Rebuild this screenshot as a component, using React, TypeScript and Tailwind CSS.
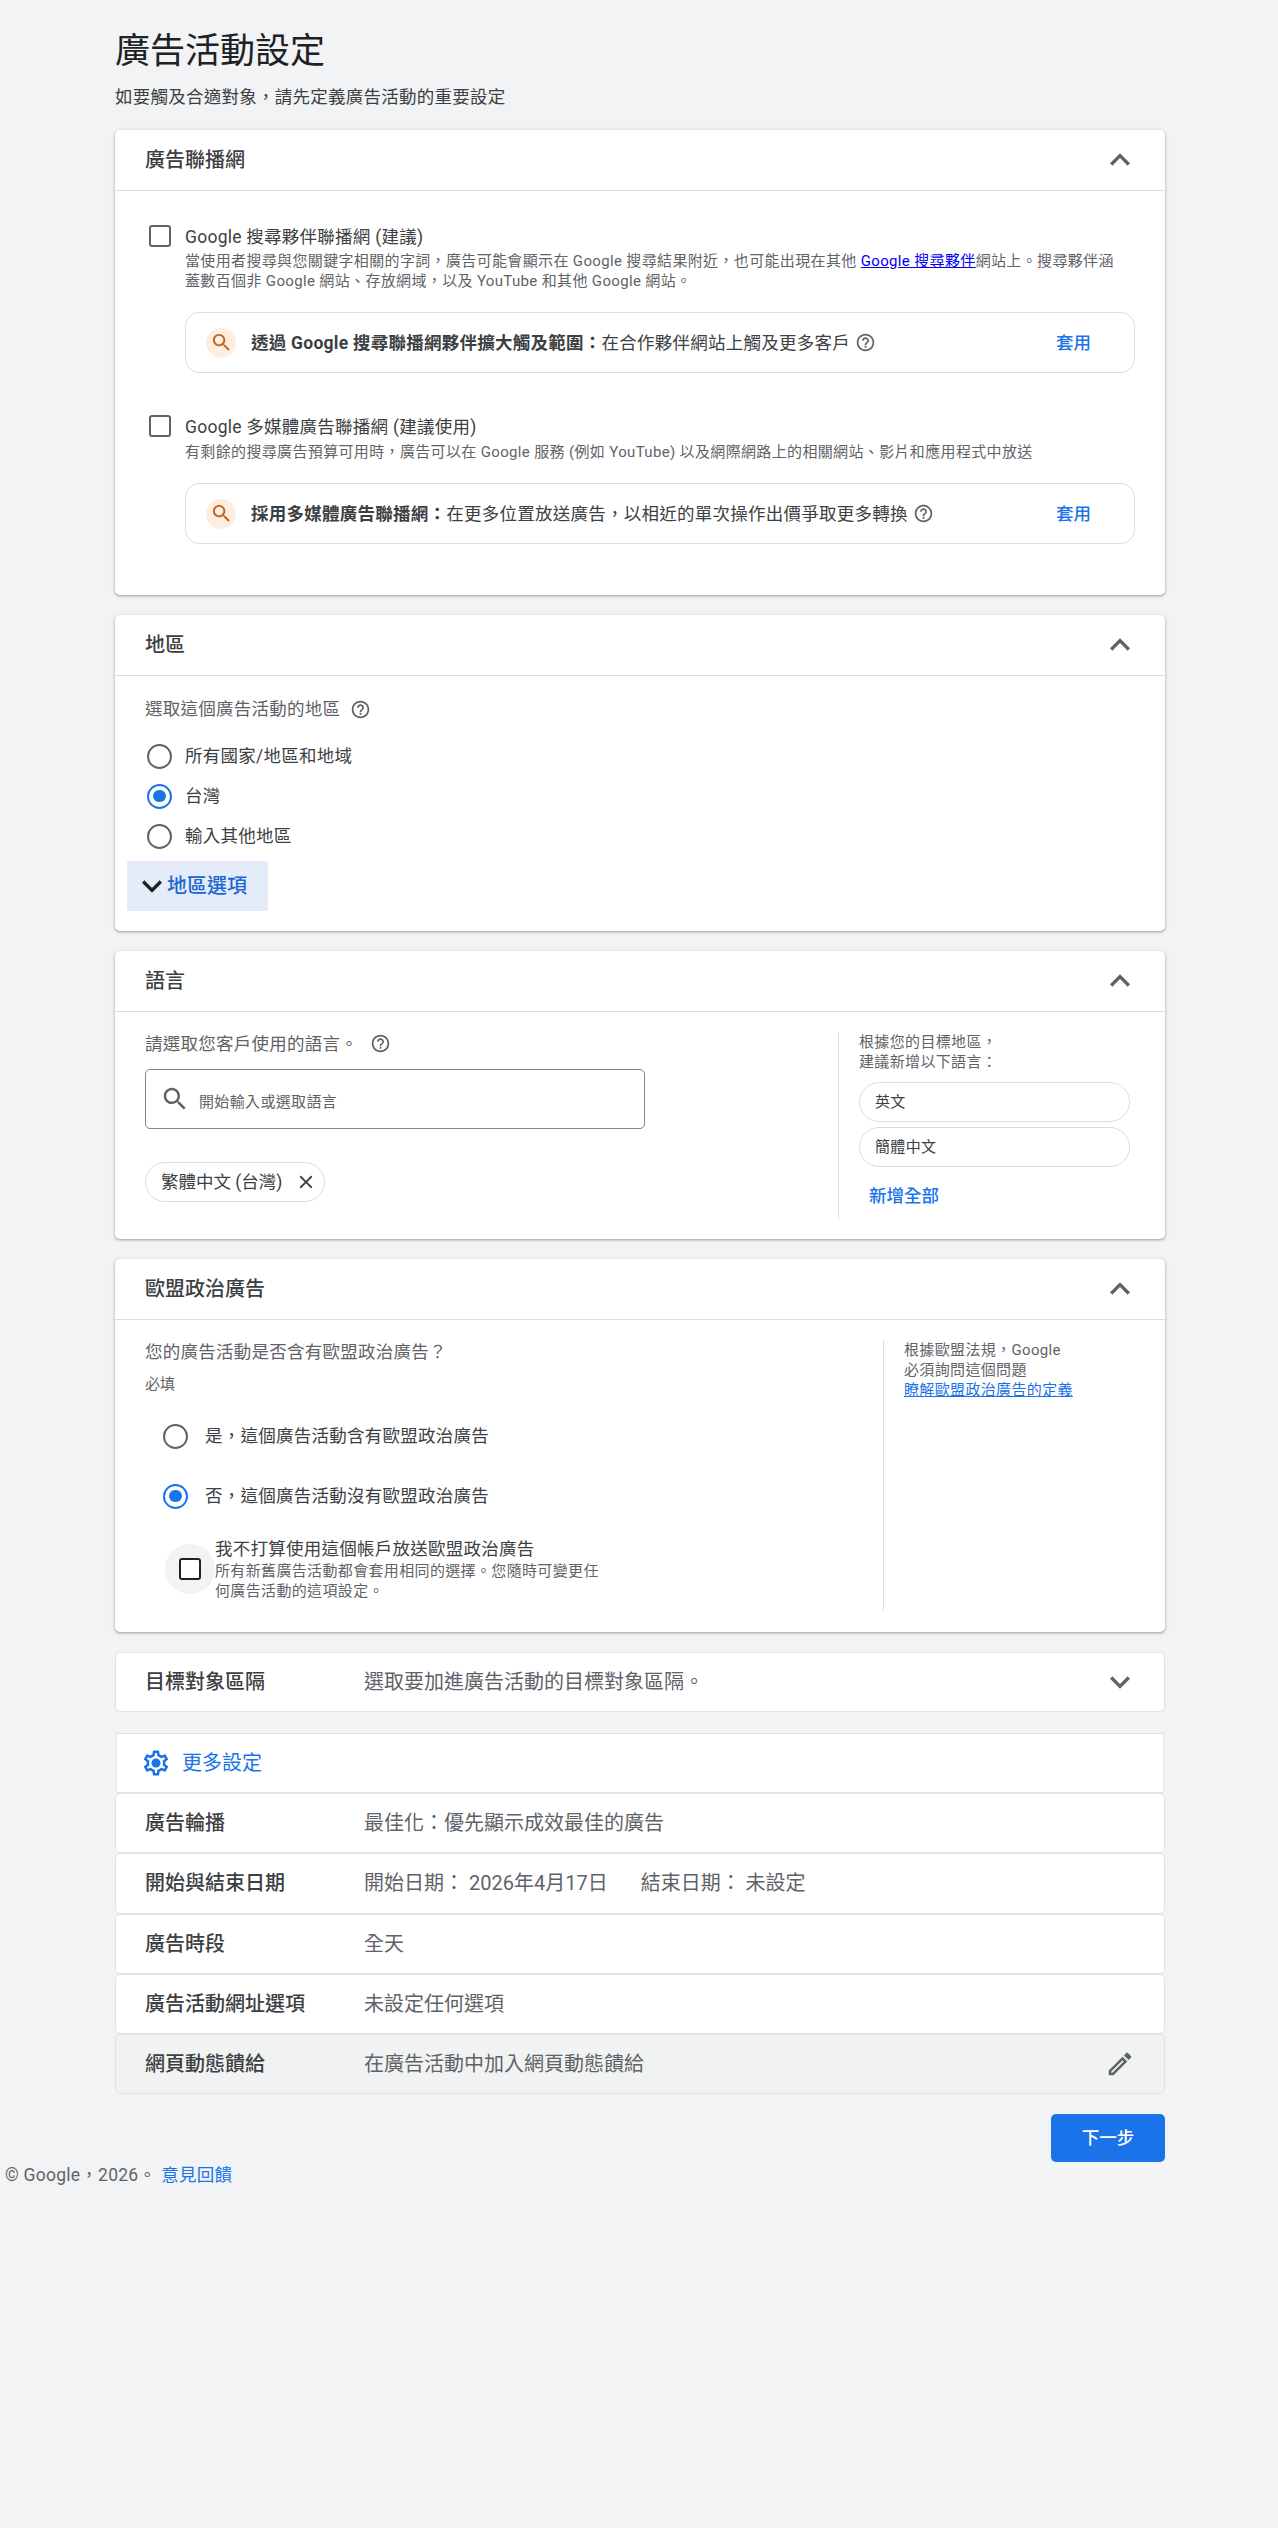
import React from "react";

const Icon = ({ d, className, extra }: { d: string; className: string; extra?: React.ReactNode }) => (
  <svg viewBox="0 0 24 24" fill="currentColor" className={className}>
    <path d={d} />
    {extra}
  </svg>
);

const ICONS = {
  up: "M12 8l-6 6 1.41 1.41L12 10.83l4.59 4.58L18 14z",
  down: "M16.59 8.59L12 13.17 7.41 8.59 6 10l6 6 6-6z",
  help: "M11 18h2v-2h-2v2zm1-16C6.48 2 2 6.48 2 12s4.48 10 10 10 10-4.48 10-10S17.52 2 12 2zm0 18c-4.41 0-8-3.59-8-8s3.59-8 8-8 8 3.59 8 8-3.59 8-8 8zm0-14c-2.21 0-4 1.79-4 4h2c0-1.1.9-2 2-2s2 .9 2 2c0 2-3 1.75-3 5h2c0-2.25 3-2.5 3-5 0-2.21-1.79-4-4-4z",
  search: "M15.5 14h-.79l-.28-.27C15.41 12.59 16 11.11 16 9.5 16 5.91 13.09 3 9.5 3S3 5.91 3 9.5 5.91 16 9.5 16c1.61 0 3.09-.59 4.23-1.57l.27.28v.79l5 4.99L20.49 19l-4.99-5zm-6 0C7.01 14 5 11.99 5 9.5S7.01 5 9.5 5 14 7.01 14 9.5 11.99 14 9.5 14z",
  close: "M19 6.41L17.59 5 12 10.59 6.41 5 5 6.41 10.59 12 5 17.59 6.41 19 12 13.41 17.59 19 19 17.59 13.41 12z",
  gear: "M19.43 12.98c.04-.32.07-.64.07-.98 0-.34-.03-.66-.07-.98l2.11-1.65c.19-.15.24-.42.12-.64l-2-3.46c-.09-.16-.26-.25-.44-.25-.06 0-.12.01-.17.03l-2.49 1c-.52-.4-1.08-.73-1.69-.98l-.38-2.65C14.46 2.18 14.25 2 14 2h-4c-.25 0-.46.18-.49.42l-.38 2.65c-.61.25-1.17.59-1.69.98l-2.49-1c-.06-.02-.12-.03-.18-.03-.17 0-.34.09-.43.25l-2 3.46c-.13.22-.07.49.12.64l2.11 1.65c-.04.32-.07.65-.07.98 0 .33.03.66.07.98l-2.11 1.65c-.19.15-.24.42-.12.64l2 3.46c.09.16.26.25.44.25.06 0 .12-.01.17-.03l2.49-1c.52.4 1.08.73 1.69.98l.38 2.65c.03.24.24.42.49.42h4c.25 0 .46-.18.49-.42l.38-2.65c.61-.25 1.17-.59 1.69-.98l2.49 1c.06.02.12.03.18.03.17 0 .34-.09.43-.25l2-3.46c.12-.22.07-.49-.12-.64l-2.11-1.65zm-1.98-1.71c.04.31.05.52.05.73 0 .21-.02.43-.05.73l-.14 1.13.89.7 1.08.84-.7 1.21-1.27-.51-1.04-.42-.9.68c-.43.32-.84.56-1.25.73l-1.06.43-.16 1.13-.2 1.35h-1.4l-.19-1.35-.16-1.13-1.06-.43c-.43-.18-.83-.41-1.23-.71l-.91-.7-1.06.43-1.27.51-.7-1.21 1.08-.84.89-.7-.14-1.13c-.03-.31-.05-.54-.05-.74s.02-.43.05-.73l.14-1.13-.89-.7-1.08-.84.7-1.21 1.27.51 1.04.42.9-.68c.43-.32.84-.56 1.25-.73l1.06-.43.16-1.13.2-1.35h1.39l.19 1.35.16 1.13 1.06.43c.43.18.83.41 1.23.71l.91.7 1.06-.43 1.27-.51.7 1.21-1.07.85-.89.7.14 1.13z",
  edit: "M14.06 9.02l.92.92L5.92 19H5v-.92l9.06-9.06M17.66 3c-.25 0-.51.1-.7.29l-1.83 1.83 3.75 3.75 1.83-1.83c.39-.39.39-1.02 0-1.41l-2.34-2.34c-.2-.2-.45-.29-.71-.29zm-3.6 3.19L3 17.25V21h3.75L17.81 9.94l-3.75-3.75z",
};

const Card = ({ title, children }: { title: string; children: React.ReactNode }) => (
  <section className="bg-white rounded-[5px] shadow-[0_1px_2px_rgba(60,64,67,0.3),0_1px_3px_1px_rgba(60,64,67,0.15)]">
    <div className="h-[61px] border-b border-[#dadce0] flex items-center justify-between pl-[30px] pr-[25px]">
      <h2 className="text-[20px] leading-[24px] font-medium text-[#3c4043]">{title}</h2>
      <Icon d={ICONS.up} className="w-[40px] h-[40px] text-[#5f6368]" />
    </div>
    {children}
  </section>
);

const Help = ({ className = "" }: { className?: string }) => (
  <Icon d={ICONS.help} className={`w-[21px] h-[21px] text-[#5f6368] shrink-0 ${className}`} />
);

const Checkbox = ({ dark }: { dark?: boolean }) => (
  <span
    className={`block w-[22px] h-[22px] rounded-[3px] border-[2.5px] bg-white shrink-0 ${
      dark ? "border-[#202124]" : "border-[#5f6368]"
    }`}
  />
);

const Radio = ({ checked }: { checked?: boolean }) => (
  <span
    className={`flex items-center justify-center w-[25px] h-[25px] rounded-full border-[2.5px] shrink-0 ${
      checked ? "border-[#1a73e8]" : "border-[#5f6368]"
    }`}
  >
    {checked && <span className="block w-[12.5px] h-[12.5px] rounded-full bg-[#1a73e8]" />}
  </span>
);

const Suggestion = ({ children }: { children: React.ReactNode }) => (
  <div className="ml-[70px] mr-[30px] mt-[21px] h-[61px] flex items-center border border-[#dadce0] rounded-[14px] pl-[20px] pr-[43px]">
    <span className="w-[30px] h-[30px] rounded-full bg-[#fdeee1] flex items-center justify-center shrink-0">
      <Icon d={ICONS.search} className="w-[23px] h-[23px] text-[#c5621a]" />
    </span>
    <div className="ml-[15px] flex-1 flex items-center text-[17.5px] tracking-[0.25px] leading-[24px] text-[#3c4043]">{children}</div>
    <span className="text-[17.5px] leading-[24px] font-medium text-[#1a73e8]">套用</span>
  </div>
);

const RadioRow = ({ label, checked }: { label: string; checked?: boolean }) => (
  <div className="h-[40px] flex items-center pl-[32px] gap-[13px]">
    <Radio checked={checked} />
    <span className="text-[17.5px] tracking-[0.25px] leading-[24px] text-[#3c4043]">{label}</span>
  </div>
);

const LangChip = ({ label, className = "" }: { label: string; className?: string }) => (
  <div className={`h-[40px] w-[271px] flex items-center pl-[15px] border border-[#dadce0] rounded-full text-[15px] tracking-[0.35px] text-[#3c4043] ${className}`}>
    {label}
  </div>
);

const SummaryRow = ({
  label,
  children,
  className = "bg-white",
  icon,
}: {
  label: string;
  children: React.ReactNode;
  className?: string;
  icon?: React.ReactNode;
}) => (
  <div className={`h-[60.25px] flex items-center justify-between border border-[#e0e2e4] rounded-[5px] pl-[29px] pr-[29px] ${className}`}>
    <div className="flex items-center">
      <span className="w-[219px] text-[20px] leading-[24px] font-medium text-[#3c4043]">{label}</span>
      <span className="text-[20px] leading-[24px] text-[#5f6368]">{children}</span>
    </div>
    {icon}
  </div>
);

export default function App() {
  return (
    <div className="min-h-[2528px] bg-[#f1f3f4] font-['Roboto','Noto_Sans_CJK_TC',sans-serif]">
      <div className="w-[1050px] ml-[115px] pt-[30px]">
        <h1 className="text-[35px] leading-[44px] text-[#202124]">廣告活動設定</h1>
        <p className="mt-[11px] mb-[21px] text-[17.5px] tracking-[0.25px] leading-[24px] text-[#3c4043]">
          如要觸及合適對象，請先定義廣告活動的重要設定
        </p>

        <div className="flex flex-col gap-[20px]">
          <Card title="廣告聯播網">
            <div className="pt-[34px] pb-[51px]">
              <div className="flex pl-[34px]">
                <Checkbox />
                <div className="ml-[14px]">
                  <div className="text-[17.5px] tracking-[0.25px] leading-[24px] text-[#3c4043]">Google 搜尋夥伴聯播網 (建議)</div>
                  <p className="mt-[2px] w-[936px] text-[15px] tracking-[0.35px] leading-[20px] text-[#5f6368]">
                    當使用者搜尋與您關鍵字相關的字詞，廣告可能會顯示在 Google 搜尋結果附近，也可能出現在其他{" "}
                    <a className="text-[#0000ee] underline">Google 搜尋夥伴</a>網站上。搜尋夥伴涵蓋數百個非 Google 網站、存放網域，以及 YouTube 和其他 Google 網站。
                  </p>
                </div>
              </div>
              <Suggestion>
                <span>
                  <b className="font-bold">透過 Google 搜尋聯播網夥伴擴大觸及範圍：</b>在合作夥伴網站上觸及更多客戶
                </span>
                <Help className="ml-[5px]" />
              </Suggestion>

              <div className="flex pl-[34px] mt-[42px]">
                <Checkbox />
                <div className="ml-[14px]">
                  <div className="text-[17.5px] tracking-[0.25px] leading-[24px] text-[#3c4043]">Google 多媒體廣告聯播網 (建議使用)</div>
                  <p className="mt-[3px] text-[15px] tracking-[0.35px] leading-[20px] text-[#5f6368]">
                    有剩餘的搜尋廣告預算可用時，廣告可以在 Google 服務 (例如 YouTube) 以及網際網路上的相關網站、影片和應用程式中放送
                  </p>
                </div>
              </div>
              <Suggestion>
                <span>
                  <b className="font-bold">採用多媒體廣告聯播網：</b>在更多位置放送廣告，以相近的單次操作出價爭取更多轉換
                </span>
                <Help className="ml-[5px]" />
              </Suggestion>
            </div>
          </Card>

          <Card title="地區">
            <div className="pt-[21px] pb-[20px]">
              <div className="flex items-center pl-[30px] text-[17.5px] tracking-[0.25px] leading-[24px] text-[#5f6368]">
                選取這個廣告活動的地區
                <Help className="ml-[10px]" />
              </div>
              <div className="mt-[15px]">
                <RadioRow label="所有國家/地區和地域" />
                <RadioRow label="台灣" checked />
                <RadioRow label="輸入其他地區" />
              </div>
              <button className="mt-[5px] ml-[12px] h-[50px] w-[141px] flex items-center pl-[5px] bg-[#e4ecf9] rounded-[2px]">
                <Icon d={ICONS.down} className="w-[40px] h-[40px] text-[#202124] -mr-[5px]" />
                <span className="text-[20px] leading-[24px] font-medium text-[#1967d2]">地區選項</span>
              </button>
            </div>
          </Card>

          <Card title="語言">
            <div className="flex pt-[20px] pb-[20px]">
              <div className="w-[723px] pl-[30px]">
                <div className="flex items-center text-[17.5px] tracking-[0.25px] leading-[24px] text-[#5f6368]">
                  請選取您客戶使用的語言。
                  <Help className="ml-[12px] -mt-[2px]" />
                </div>
                <div className="mt-[13px] w-[500px] h-[60px] flex items-center border border-[#80868b] rounded-[5px] pl-[14px]">
                  <Icon d={ICONS.search} className="w-[30px] h-[30px] text-[#5f6368]" />
                  <span className="ml-[9px] mt-[6px] text-[15px] tracking-[0.35px] text-[#5f6368]">開始輸入或選取語言</span>
                </div>
                <div className="mt-[33px] inline-flex h-[40px] w-[180px] items-center justify-between border border-[#dadce0] rounded-full pl-[15px] pr-[7px]">
                  <span className="text-[17.5px] text-[#3c4043]">繁體中文 (台灣)</span>
                  <Icon d={ICONS.close} className="w-[22px] h-[22px] text-[#3c4043]" />
                </div>
              </div>
              <div className="flex-1 h-[187px] border-l border-[#dadce0] pl-[20px]">
                <p className="text-[15px] tracking-[0.35px] leading-[20px] text-[#5f6368]">
                  根據您的目標地區，
                  <br />
                  建議新增以下語言：
                </p>
                <LangChip label="英文" className="mt-[10px]" />
                <LangChip label="簡體中文" className="mt-[5px]" />
                <div className="mt-[17px] ml-[10px] text-[17.5px] leading-[24px] font-medium text-[#1a73e8]">新增全部</div>
              </div>
            </div>
          </Card>

          <Card title="歐盟政治廣告">
            <div className="flex pt-[20px] pb-[21px]">
              <div className="w-[768px] pl-[30px] pb-[10px]">
                <div className="text-[17.5px] tracking-[0.25px] leading-[24px] text-[#5f6368]">您的廣告活動是否含有歐盟政治廣告？</div>
                <div className="mt-[10px] text-[15px] leading-[20px] text-[#5f6368]">必填</div>
                <div className="mt-[12px] -ml-[30px] pl-[48px]">
                  <div className="h-[60px] flex items-center gap-[17px]">
                    <Radio />
                    <span className="text-[17.5px] tracking-[0.25px] leading-[24px] text-[#3c4043]">是，這個廣告活動含有歐盟政治廣告</span>
                  </div>
                  <div className="h-[60px] flex items-center gap-[17px]">
                    <Radio checked />
                    <span className="text-[17.5px] tracking-[0.25px] leading-[24px] text-[#3c4043]">否，這個廣告活動沒有歐盟政治廣告</span>
                  </div>
                </div>
                <div className="mt-[11px] -ml-[30px] pl-[50px] flex items-center">
                  <span className="w-[50px] h-[50px] rounded-full bg-[#f1f3f4] flex items-center justify-center shrink-0">
                    <Checkbox dark />
                  </span>
                  <div>
                    <div className="text-[17.5px] tracking-[0.25px] leading-[24px] text-[#3c4043]">我不打算使用這個帳戶放送歐盟政治廣告</div>
                    <p className="w-[392px] text-[15px] tracking-[0.35px] leading-[20px] text-[#5f6368]">
                      所有新舊廣告活動都會套用相同的選擇。您隨時可變更任何廣告活動的這項設定。
                    </p>
                  </div>
                </div>
              </div>
              <div className="flex-1 border-l border-[#dadce0] pl-[20px] text-[15px] tracking-[0.35px] leading-[20px] text-[#5f6368]">
                根據歐盟法規，Google
                <br />
                必須詢問這個問題
                <br />
                <a className="text-[#1a73e8] underline">瞭解歐盟政治廣告的定義</a>
              </div>
            </div>
          </Card>

          <div className="h-[60px] flex items-center justify-between bg-white border border-[#e0e2e4] rounded-[5px] pl-[29px] pr-[24px]">
            <div className="flex items-center">
              <span className="w-[219px] text-[20px] leading-[24px] font-medium text-[#3c4043]">目標對象區隔</span>
              <span className="text-[20px] leading-[24px] text-[#5f6368]">選取要加進廣告活動的目標對象區隔。</span>
            </div>
            <Icon d={ICONS.down} className="w-[40px] h-[40px] text-[#5f6368]" />
          </div>
        </div>

        <div className="mt-[21px] mx-px h-[60px] flex items-center bg-white border border-[#e0e2e4] pl-[24px]">
          <Icon
            d={ICONS.gear}
            className="w-[30px] h-[30px] text-[#1a73e8]"
            extra={<circle cx="12" cy="12" r="3.6" />}
          />
          <span className="ml-[11px] text-[20px] leading-[24px] text-[#1a73e8]">更多設定</span>
        </div>
        <SummaryRow label="廣告輪播">最佳化：優先顯示成效最佳的廣告</SummaryRow>
        <SummaryRow label="開始與結束日期">
          開始日期： 2026年4月17日<span className="ml-[33px]">結束日期： 未設定</span>
        </SummaryRow>
        <SummaryRow label="廣告時段">全天</SummaryRow>
        <SummaryRow label="廣告活動網址選項">未設定任何選項</SummaryRow>
        <SummaryRow
          label="網頁動態饋給"
          className="bg-[#f1f3f3]"
          icon={<Icon d={ICONS.edit} className="w-[30px] h-[30px] text-[#5f6368]" />}
        >
          在廣告活動中加入網頁動態饋給
        </SummaryRow>

        <div className="mt-[20px] flex justify-end">
          <button className="w-[114px] h-[48px] rounded-[5px] bg-[#1a73e8] text-white text-[17.5px] font-medium">下一步</button>
        </div>
      </div>

      <footer className="pl-[5px] mt-[1px] text-[17.5px] tracking-[0.25px] leading-[24px] text-[#5f6368]">
        © Google，2026。<a className="ml-[5px] text-[#1a73e8]">意見回饋</a>
      </footer>
    </div>
  );
}
